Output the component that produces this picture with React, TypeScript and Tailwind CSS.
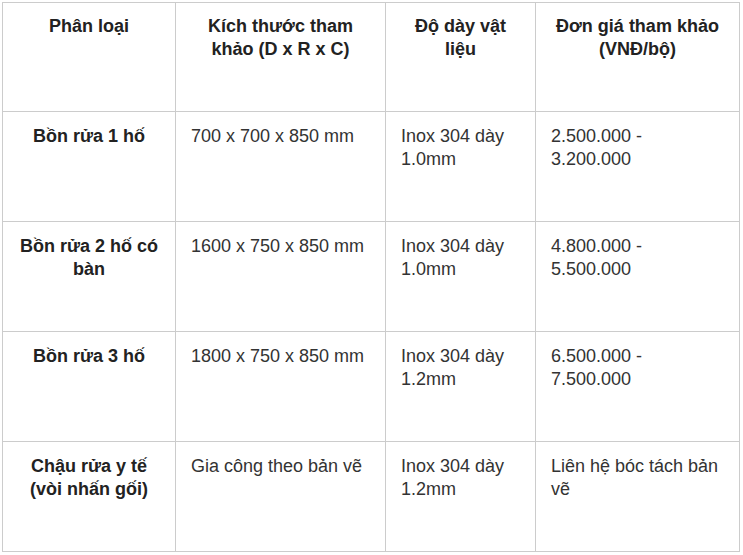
const HEADERS = [
  'Phân loại',
  'Kích thước tham khảo (D x R x C)',
  'Độ dày vật liệu',
  'Đơn giá tham khảo (VNĐ/bộ)',
];

const ROWS = [
  ['Bồn rửa 1 hố', '700 x 700 x 850 mm', 'Inox 304 dày 1.0mm', '2.500.000 - 3.200.000'],
  ['Bồn rửa 2 hố có bàn', '1600 x 750 x 850 mm', 'Inox 304 dày 1.0mm', '4.800.000 - 5.500.000'],
  ['Bồn rửa 3 hố', '1800 x 750 x 850 mm', 'Inox 304 dày 1.2mm', '6.500.000 - 7.500.000'],
  ['Chậu rửa y tế (vòi nhấn gối)', 'Gia công theo bản vẽ', 'Inox 304 dày 1.2mm', 'Liên hệ bóc tách bản vẽ'],
];

export default function App() {
  return (
    <div className="w-[743px] h-[555px] bg-white pl-[2px] pt-[2px] font-['Liberation_Sans',Arial,sans-serif] text-[18px] leading-[1.3] text-[#333]">
      <div className="grid grid-cols-[173px_210px_150px_204px] w-[738px] border-l border-t border-[#cccccc]">
        {HEADERS.map((h, i) => (
          <div key={i} className="h-[109px] border-r border-b border-[#cccccc] px-[15px] pt-[12px] text-center font-bold text-[#222]">
            {h}
          </div>
        ))}
        {ROWS.map((row, ri) =>
          row.map((cell, ci) => (
            <div
              key={ri + '-' + ci}
              className={
                ci === 0
                  ? 'h-[110px] border-r border-b border-[#cccccc] px-[15px] pt-[13px] text-center font-bold text-[#222]'
                  : 'h-[110px] border-r border-b border-[#cccccc] px-[15px] pt-[13px]'
              }
            >
              {cell}
            </div>
          ))
        )}
      </div>
    </div>
  );
}
